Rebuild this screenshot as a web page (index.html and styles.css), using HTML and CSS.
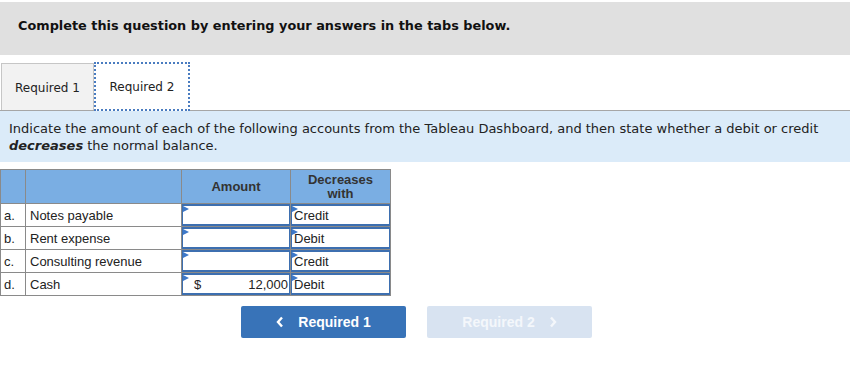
FILE: index.html
```html
<!DOCTYPE html>
<html>
<head>
<meta charset="utf-8">
<link rel="stylesheet" href="styles.css">
</head>
<body>
<div class="wrap">
  <div class="header">Complete this question by entering your answers in the tabs below.</div>
  <div class="tabs">
    <div class="tab tab-off">Required 1</div>
    <div class="tab tab-on">Required 2</div>
  </div>
  <div class="instructions">Indicate the amount of each of the following accounts from the Tableau Dashboard, and then state whether a debit or credit <b><i>decreases</i></b> the normal balance.</div>
  <table class="grid">
    <colgroup>
      <col class="c-letter"><col class="c-name"><col class="c-amt"><col class="c-dec">
    </colgroup>
    <thead>
      <tr><th></th><th></th><th>Amount</th><th>Decreases<br>with</th></tr>
    </thead>
    <tbody>
      <tr><td class="letter">a.</td><td class="name">Notes payable</td><td class="inp"><div class="box"><span class="flag"></span></div></td><td class="inp"><div class="box"><span class="flag"></span>Credit</div></td></tr>
      <tr><td class="letter">b.</td><td class="name">Rent expense</td><td class="inp"><div class="box"><span class="flag"></span></div></td><td class="inp"><div class="box"><span class="flag"></span>Debit</div></td></tr>
      <tr><td class="letter">c.</td><td class="name">Consulting revenue</td><td class="inp"><div class="box"><span class="flag"></span></div></td><td class="inp"><div class="box"><span class="flag"></span>Credit</div></td></tr>
      <tr><td class="letter">d.</td><td class="name">Cash</td><td class="inp"><div class="box money"><span class="flag"></span><span class="dollar">$</span><span class="num">12,000</span></div></td><td class="inp"><div class="box"><span class="flag"></span>Debit</div></td></tr>
    </tbody>
  </table>
  <div class="nav">
    <div class="btn btn-prev"><svg class="chev chev-l" width="8" height="12" viewBox="0 0 8 12"><polyline points="6,1.5 2,6 6,10.5" fill="none" stroke="currentColor" stroke-width="2.4"/></svg>Required 1</div>
    <div class="btn btn-next">Required 2<svg class="chev chev-r" width="8" height="12" viewBox="0 0 8 12"><polyline points="2,1.5 6,6 2,10.5" fill="none" stroke="currentColor" stroke-width="2.4"/></svg></div>
  </div>
</div>
</body>
</html>
```
FILE: styles.css
```css
body {
  margin: 0;
  background: #fff;
  font-family: "DejaVu Sans", Verdana, sans-serif;
  color: #111;
}
.wrap {
  width: 850px;
}
.header {
  margin-top: 2px;
  height: 53px;
  background: #e0e0e0;
  box-sizing: border-box;
  padding: 16px 0 0 18px;
  font-weight: bold;
  font-size: 12.85px;
  color: #111;
}
.tabs {
  display: flex;
  align-items: flex-end;
  margin-top: 7px;
  border-bottom: 1px solid #a6a6a6;
  padding-left: 1px;
  height: 49px;
  box-sizing: border-box;
}
.tab {
  box-sizing: border-box;
  font-size: 12px;
  display: flex;
  align-items: center;
  justify-content: center;
  padding-top: 1px;
}
.tab-off {
  width: 93px;
  height: 47px;
  background: #f2f2f2;
  border: 1px solid #c6c6c6;
  border-bottom: none;
  color: #222;
}
.tab-on {
  width: 96px;
  height: 49px;
  background: #fff;
  border: 2px dotted #4a7cc0;
  margin-bottom: -1px;
  color: #222;
}
.instructions {
  background: #dbebf9;
  height: 51px;
  box-sizing: border-box;
  padding: 9px 9px 0 9px;
  font-size: 13px;
  line-height: 17px;
  color: #222;
}
.grid {
  margin-top: 7px;
  border-collapse: collapse;
  font-family: "Liberation Sans", Arial, sans-serif;
  font-size: 13px;
  color: #222;
}
.c-letter { width: 25px; }
.c-name { width: 156px; }
.c-amt { width: 109px; }
.c-dec { width: 100px; }
.grid th {
  background: #7aaee3;
  border: 1px solid #8a8a8a;
  height: 33px;
  padding: 0;
  font-weight: bold;
  font-size: 13px;
  line-height: 14px;
  color: #333;
}
.grid td {
  border: 1px solid #8a8a8a;
  height: 22px;
  padding: 0;
  box-sizing: border-box;
}
.grid td.letter {
  padding-left: 3px;
}
.grid td.name {
  padding-left: 4px;
}
.grid td.inp {
  padding: 0;
  vertical-align: top;
}
.box {
  position: relative;
  height: 22px;
  box-sizing: border-box;
  border: 1px solid #3d6fb0;
  border-top-width: 2px;
  border-bottom-width: 2px;
  padding-left: 2px;
  display: flex;
  align-items: center;
  font-size: 13px;
}
.flag {
  position: absolute;
  left: 0;
  top: 0;
  width: 0;
  height: 0;
  border-left: 6px solid #3d78c8;
  border-top: 3px solid transparent;
  border-bottom: 3px solid transparent;
}
.money {
  justify-content: space-between;
  padding: 0 1px 0 11px;
}
.nav {
  display: flex;
  gap: 21px;
  margin: 10px 0 0 241px;
}
.btn {
  width: 165px;
  height: 32px;
  border-radius: 2px;
  display: flex;
  align-items: center;
  justify-content: center;
  font-family: "Liberation Sans", Arial, sans-serif;
  font-weight: bold;
  font-size: 14px;
  color: #fff;
}
.btn-prev {
  background: #3873b8;
}
.btn-next {
  background: #d8e3f1;
  color: #f4f7fb;
}
.chev {
  display: block;
}
.chev-l { margin-right: 14px; }
.chev-r { margin-left: 14px; }
```
